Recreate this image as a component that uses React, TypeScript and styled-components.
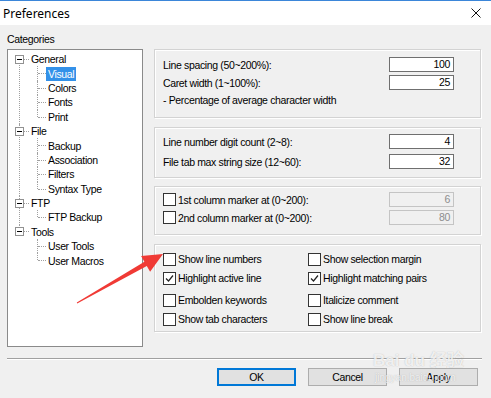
import React from "react";
import styled, { createGlobalStyle, css } from "styled-components";

const Global = createGlobalStyle`
  html, body { margin: 0; padding: 0; background: #f0f0f0; }
  #root { width: 491px; height: 398px; }
`;

const Window = styled.div`
  position: relative;
  width: 491px;
  height: 398px;
  box-sizing: border-box;
  display: flex;
  flex-direction: column;
  background: #f0f0f0;
  overflow: hidden;
  font-family: "Liberation Sans", Arial, sans-serif;
  font-size: 10.5px;
  letter-spacing: -0.35px;
  color: #000;
`;

const TitleBar = styled.div`
  height: 25px;
  box-sizing: border-box;
  border-top: 1px solid #3b86d9;
  background: #fff;
  display: flex;
  align-items: center;
  justify-content: space-between;
  padding: 0 10px 0 3px;
  font-family: "Noto Sans", "Open Sans", sans-serif;
  font-size: 12px;
  letter-spacing: 0;
`;

const Content = styled.div`
  display: grid;
  grid-template-columns: 136px 327px;
  column-gap: 11px;
  padding: 7px 0 0 7px;
`;

const LeftCol = styled.div`
  display: flex;
  flex-direction: column;
`;

const Caption = styled.div`
  line-height: 14px;
  height: 14px;
  margin-bottom: 3px;
`;

const TreeBox = styled.div`
  height: 298px;
  box-sizing: border-box;
  border: 1px solid #8a8a8a;
  background: #fff;
  padding-top: 2px;
`;

const List = styled.ul`
  list-style: none;
  margin: 0;
  padding: 0;
`;

const RootItem = styled.li<{ $first?: boolean; $last?: boolean }>`
  position: relative;
  &::before {
    content: "";
    position: absolute;
    left: 11px;
    border-left: 1px dotted #a0a0a0;
    top: ${(p) => (p.$first ? "7px" : "0")};
    ${(p) => (p.$last ? css`height: 7px;` : css`bottom: 0;`)}
  }
`;

const NodeRow = styled.div`
  position: relative;
  height: 14.4px;
  display: flex;
  align-items: center;
  padding-left: 7px;
`;

const Expander = styled.span`
  position: relative;
  z-index: 1;
  width: 9px;
  height: 9px;
  box-sizing: border-box;
  border: 1px solid #919191;
  background: #fff;
  &::after {
    content: "";
    position: absolute;
    left: 1px;
    top: 3px;
    width: 5px;
    border-top: 1px solid #000;
  }
`;

const Dash = styled.span`
  width: 5px;
  border-top: 1px dotted #a0a0a0;
`;

const NodeLabel = styled.span<{ $selected?: boolean }>`
  padding: 0 2px;
  line-height: 14px;
  height: 14px;
  white-space: nowrap;
  ${(p) =>
    p.$selected &&
    css`
      background: #3391e9;
      color: #fff;
    `}
`;

const ChildItem = styled.li<{ $last?: boolean }>`
  position: relative;
  height: 14.4px;
  display: flex;
  align-items: center;
  padding-left: 38px;
  &::before {
    content: "";
    position: absolute;
    left: 29px;
    top: 0;
    border-left: 1px dotted #a0a0a0;
    ${(p) => (p.$last ? css`height: 7px;` : css`bottom: 0;`)}
  }
  &::after {
    content: "";
    position: absolute;
    left: 30px;
    width: 8px;
    top: 7px;
    border-top: 1px dotted #a0a0a0;
  }
`;

const RightCol = styled.div`
  display: flex;
  flex-direction: column;
  padding-top: 17px;
`;

const Group = styled.div<{ $gap: number; $pt: number; $pb: number }>`
  margin-top: ${(p) => p.$gap}px;
  padding: ${(p) => p.$pt}px 26px ${(p) => p.$pb}px 8px;
  border: 1px solid #d3d3d3;
  box-shadow: inset 1px 1px 0 #fff, 1px 1px 0 #fff;
  display: flex;
  flex-direction: column;
`;

const FieldRow = styled.div<{ $gap?: number }>`
  height: 15px;
  display: flex;
  align-items: center;
  justify-content: space-between;
  margin-top: ${(p) => p.$gap ?? 0}px;
`;

const Note = styled.div<{ $gap?: number }>`
  height: 15px;
  line-height: 15px;
  margin-top: ${(p) => p.$gap ?? 0}px;
`;

const Input = styled.div<{ $disabled?: boolean }>`
  width: 65px;
  height: 15px;
  box-sizing: border-box;
  border: 1px solid ${(p) => (p.$disabled ? "#c4c4c4" : "#6f6f6f")};
  background: ${(p) => (p.$disabled ? "#f0f0f0" : "#fff")};
  color: ${(p) => (p.$disabled ? "#8d8d8d" : "#000")};
  text-align: right;
  padding-right: 3px;
  line-height: 13px;
`;

const CheckLabel = styled.label`
  display: flex;
  align-items: center;
  gap: 2px;
  height: 16px;
  white-space: nowrap;
`;

const Box = styled.span`
  width: 13px;
  height: 13px;
  box-sizing: border-box;
  border: 1px solid #333;
  background: #fff;
  display: flex;
  align-items: center;
  justify-content: center;
`;

const OptionGrid = styled.div<{ $gap?: number }>`
  display: grid;
  grid-template-columns: 145px 1fr;
  row-gap: 3px;
  margin-top: ${(p) => p.$gap ?? 0}px;
`;

const Separator = styled.div`
  margin: 11px 9px 0 7px;
  border-top: 1px solid #a0a0a0;
  border-bottom: 1px solid #fff;
`;

const ButtonRow = styled.div`
  display: flex;
  justify-content: flex-end;
  gap: 12px;
  padding: 8px 13px 0 0;
`;

const Button = styled.button<{ $default?: boolean }>`
  width: 79px;
  height: 18px;
  box-sizing: border-box;
  border: 1px solid ${(p) => (p.$default ? "#0078d7" : "#adadad")};
  box-shadow: ${(p) => (p.$default ? "inset 0 0 0 1px #0078d7" : "none")};
  background: #e1e1e1;
  font: inherit;
  letter-spacing: inherit;
  color: #000;
  padding: 0;
  line-height: 14px;
`;

const Overlay = styled.svg`
  position: absolute;
  left: 0;
  top: 0;
  pointer-events: none;
`;

const Watermark = styled.div`
  position: absolute;
  left: 373px;
  top: 352px;
  display: flex;
  flex-direction: column;
  align-items: flex-start;
  color: rgba(255, 255, 255, 0.8);
  text-shadow: 0 0 1px rgba(120, 120, 120, 0.5);
  pointer-events: none;
  letter-spacing: 0;
`;

const WmMain = styled.span`
  font-family: "Liberation Sans", "Noto Sans CJK SC", sans-serif;
  font-weight: bold;
  font-size: 17px;
  line-height: 18px;
`;

const WmSub = styled.span`
  font-family: "Liberation Sans", sans-serif;
  font-size: 10px;
  line-height: 12px;
  margin-top: 2px;
  padding-left: 2px;
`;

const Check = ({ checked, label }: { checked?: boolean; label: string }) => (
  <CheckLabel>
    <Box>
      {checked && (
        <svg width="9" height="9" viewBox="0 0 9 9">
          <path d="M1 4.5 L3.5 7 L8 1.5" fill="none" stroke="#222" strokeWidth="1.2" />
        </svg>
      )}
    </Box>
    {label}
  </CheckLabel>
);

const tree = [
  { name: "General", children: ["Visual", "Colors", "Fonts", "Print"] },
  { name: "File", children: ["Backup", "Association", "Filters", "Syntax Type"] },
  { name: "FTP", children: ["FTP Backup"] },
  { name: "Tools", children: ["User Tools", "User Macros"] },
];

export default function App() {
  return (
    <>
      <Global />
      <Window>
        <TitleBar>
          <span>Preferences</span>
          <svg width="10" height="10" viewBox="0 0 10 10">
            <path d="M0.5 0.5 L9.5 9.5 M9.5 0.5 L0.5 9.5" stroke="#111" strokeWidth="1" />
          </svg>
        </TitleBar>
        <Content>
          <LeftCol>
            <Caption>Categories</Caption>
            <TreeBox>
              <List>
                {tree.map((n, i) => (
                  <RootItem key={n.name} $first={i === 0} $last={i === tree.length - 1}>
                    <NodeRow>
                      <Expander />
                      <Dash />
                      <NodeLabel>{n.name}</NodeLabel>
                    </NodeRow>
                    <List>
                      {n.children.map((c, j) => (
                        <ChildItem key={c} $last={j === n.children.length - 1}>
                          <NodeLabel $selected={c === "Visual"}>{c}</NodeLabel>
                        </ChildItem>
                      ))}
                    </List>
                  </RootItem>
                ))}
              </List>
            </TreeBox>
          </LeftCol>
          <RightCol>
            <Group $gap={0} $pt={7} $pb={9}>
              <FieldRow>
                <span>Line spacing (50~200%):</span>
                <Input>100</Input>
              </FieldRow>
              <FieldRow $gap={3}>
                <span>Caret width (1~100%):</span>
                <Input>25</Input>
              </FieldRow>
              <Note $gap={3}>- Percentage of average character width</Note>
            </Group>
            <Group $gap={9} $pt={6} $pb={8}>
              <FieldRow>
                <span>Line number digit count (2~8):</span>
                <Input>4</Input>
              </FieldRow>
              <FieldRow $gap={5}>
                <span>File tab max string size (12~60):</span>
                <Input>32</Input>
              </FieldRow>
            </Group>
            <Group $gap={8} $pt={5} $pb={9}>
              <FieldRow>
                <Check label="1st column marker at (0~200):" />
                <Input $disabled>6</Input>
              </FieldRow>
              <FieldRow $gap={3}>
                <Check label="2nd column marker at (0~200):" />
                <Input $disabled>80</Input>
              </FieldRow>
            </Group>
            <Group $gap={9} $pt={6} $pb={4}>
              <OptionGrid>
                <Check label="Show line numbers" />
                <Check label="Show selection margin" />
                <Check checked label="Highlight active line" />
                <Check checked label="Highlight matching pairs" />
              </OptionGrid>
              <OptionGrid $gap={6}>
                <Check label="Embolden keywords" />
                <Check label="Italicize comment" />
                <Check label="Show tab characters" />
                <Check label="Show line break" />
              </OptionGrid>
            </Group>
          </RightCol>
        </Content>
        <Separator />
        <ButtonRow>
          <Button $default>OK</Button>
          <Button>Cancel</Button>
          <Button>Apply</Button>
        </ButtonRow>
        <Watermark>
          <WmMain>Bai du 经验</WmMain>
          <WmSub>jingyan.baidu.com</WmSub>
        </Watermark>
        <Overlay width="491" height="398" viewBox="0 0 491 398">
          <polygon
            points="76.8,302.6 144.4,261.7 141.1,256.1 163,254 150.1,271.7 146.8,266.1 77.2,303.4"
            fill="#f03a35"
          />
        </Overlay>
      </Window>
    </>
  );
}
